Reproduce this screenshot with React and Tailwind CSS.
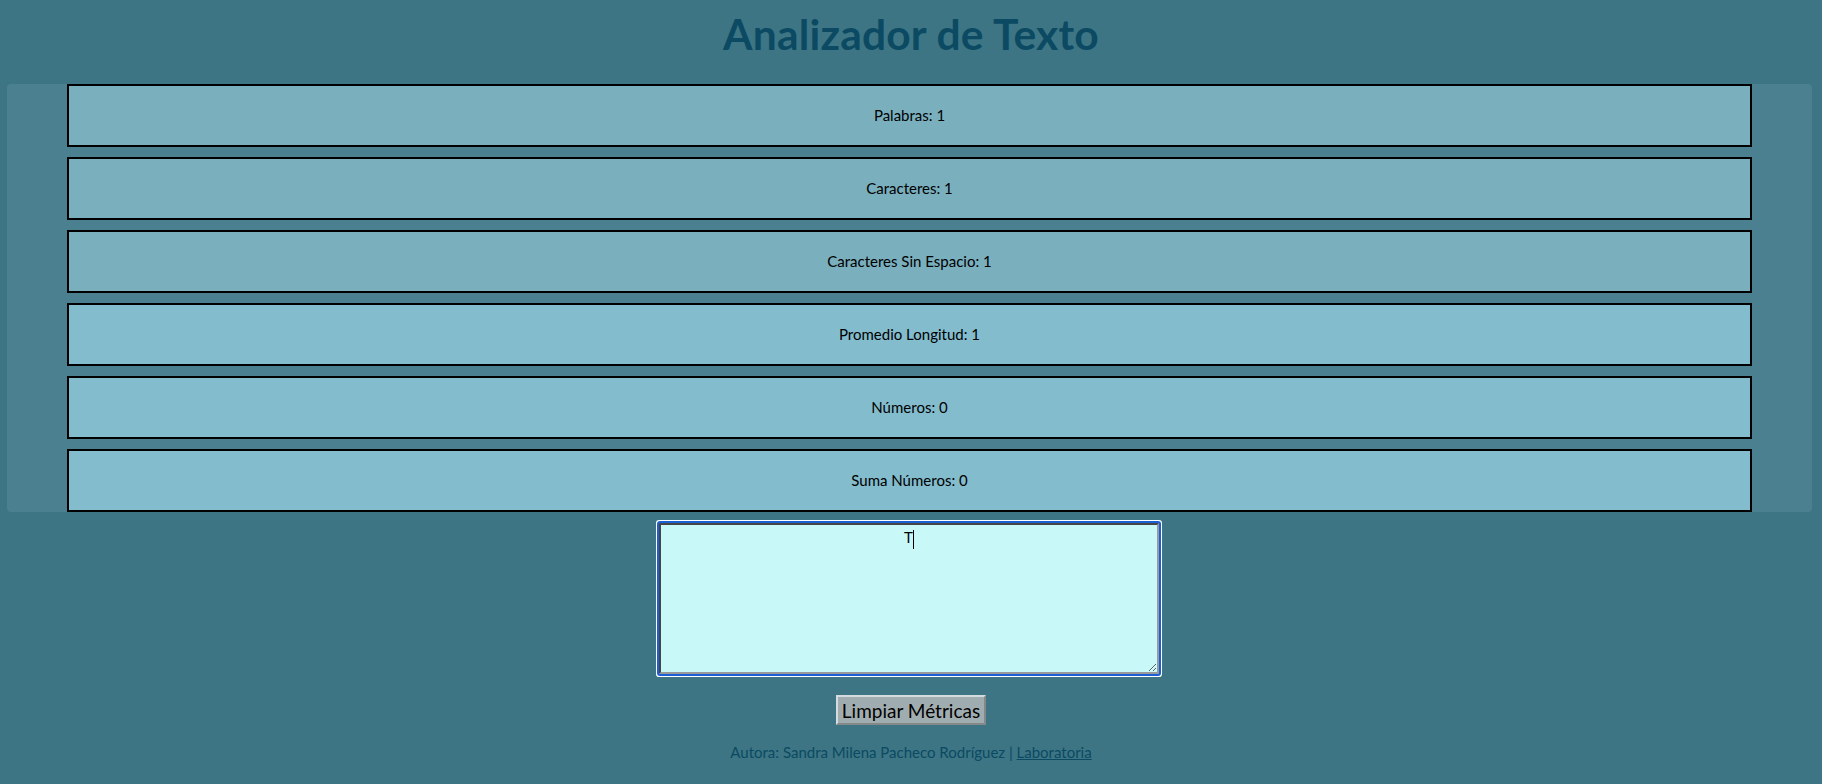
import { useState } from "react";

const metrics = [
  { label: "Palabras", value: "1", tone: "bg-[#7aafbe]" },
  { label: "Caracteres", value: "1", tone: "bg-[#7aafbe]" },
  { label: "Caracteres Sin Espacio", value: "1", tone: "bg-[#7aafbe]" },
  { label: "Promedio Longitud", value: "1", tone: "bg-[#83bccd]" },
  { label: "Números", value: "0", tone: "bg-[#83bccd]" },
  { label: "Suma Números", value: "0", tone: "bg-[#83bccd]" },
];

function MetricBox({ label, value, tone }) {
  return (
    <li
      className={`h-[63px] border-2 border-black flex items-center justify-center text-[15px] text-black ${tone}`}
    >
      {label}: {value}
    </li>
  );
}

export default function App() {
  const [text, setText] = useState("T");

  return (
    <div className="min-h-[784px] bg-[#3d7584] font-['Lato','Open_Sans',sans-serif] overflow-hidden">
      {/* Header */}
      <header className="h-[84px] flex justify-center pt-[10px]">
        <h1 className="text-[42.5px] leading-[48px] font-bold text-[#0b4a62] tracking-[0.2px]">
          Analizador de Texto
        </h1>
      </header>

      {/* Metrics */}
      <section className="ml-[7px] w-[1805px] bg-[#4b8090] rounded-[4px] px-[60px]">
        <ul className="flex flex-col gap-[10px]">
          {metrics.map((m) => (
            <MetricBox key={m.label} {...m} />
          ))}
        </ul>
      </section>

      {/* Input */}
      <div className="flex justify-center mt-[11px] pr-[5px]">
        <div className="relative">
          <textarea
            value={text}
            onChange={(e) => setText(e.target.value)}
            className="block w-[500px] h-[151px] bg-[#c8f9f8] text-center text-[15px] text-black caret-black border-2 [border-style:inset] border-[#9a9a9a] outline-2 outline-[#1a5fd6] shadow-[0_0_0_3px_white] rounded-[1px] pt-[1px] font-['Lato','Open_Sans',sans-serif]"
          />
          {/* caret */}
          <span className="absolute left-[calc(50%+4px)] top-[7px] h-[19px] w-px bg-black pointer-events-none" />
        </div>
      </div>

      <div className="flex justify-center mt-[21px]">
        <button
          onClick={() => setText("")}
          className="h-[30px] w-[150px] bg-[#a0adb0] text-[19px] text-black border-2 [border-style:outset] border-[#d5dcdd] leading-none"
        >
          Limpiar Métricas
        </button>
      </div>

      <footer className="flex justify-center mt-[16px] text-[15px] text-[#0b4a62]">
        <p>
          Autora: Sandra Milena Pacheco Rodríguez |{" "}
          <a href="#" className="underline">
            Laboratoria
          </a>
        </p>
      </footer>
    </div>
  );
}
